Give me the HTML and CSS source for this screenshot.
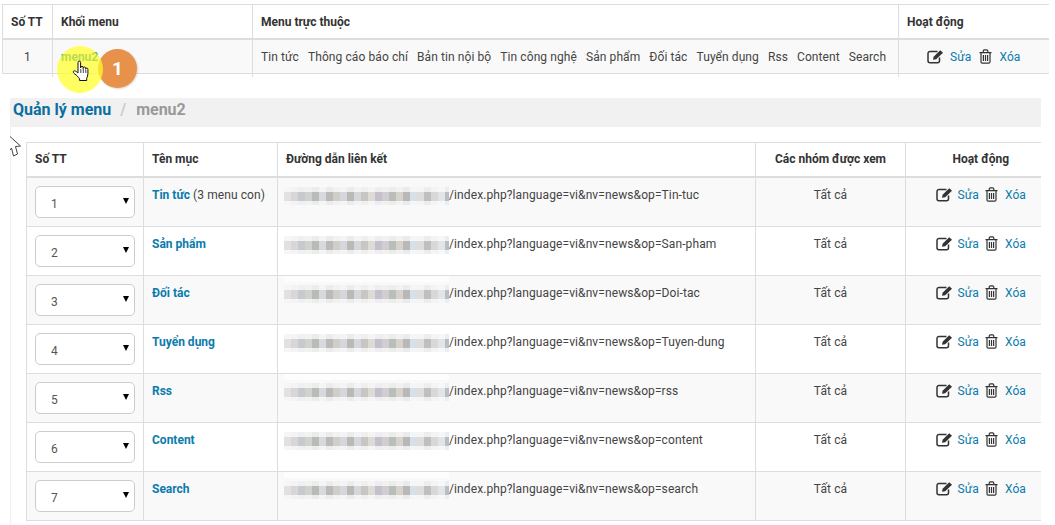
FILE: index.html
```html
<!DOCTYPE html>
<html lang="vi">
<head>
<meta charset="utf-8">
<title>Quản lý menu</title>
<link rel="stylesheet" href="styles.css">
</head>
<body>
<svg class="defs" width="0" height="0" aria-hidden="true">
  <symbol id="edit" viewBox="0 0 17 15">
    <path d="M12.500 8.500v3.200a2 2 0 0 1-2 2H3a2 2 0 0 1-2-2V4.500a2 2 0 0 1 2-2h7.500" fill="none" stroke="#333" stroke-width="1.500"/>
    <path d="M6 10.800l.6-3L13.200 1.200l2.800 2.500-6.800 6.600z" fill="#333"/>
  </symbol>
  <symbol id="trash" viewBox="0 0 13 15">
    <path d="M2 4v9a1.200 1.200 0 0 0 1.200 1.200h6.600A1.200 1.200 0 0 0 11 13V4M.5 3.600h12M4.200 3.400V2q0-1.200 1.200-1.200h2.200q1.200 0 1.200 1.200v1.400M4.400 6v6M6.500 6v6M8.600 6v6" fill="none" stroke="#333" stroke-width="1.200"/>
  </symbol>
</svg>

<table class="grid top-grid">
  <colgroup><col class="c-a"><col class="c-b"><col class="c-c"><col class="c-d"></colgroup>
  <thead>
    <tr><th>Số TT</th><th>Khối menu</th><th>Menu trực thuộc</th><th>Hoạt động</th></tr>
  </thead>
  <tbody>
    <tr class="striped">
      <td class="center">1</td>
      <td><a class="strong" href="#">menu2</a></td>
      <td class="subs"><span>Tin tức</span><span>Thông cáo báo chí</span><span>Bản tin nội bộ</span><span>Tin công nghệ</span><span>Sản phẩm</span><span>Đối tác</span><span>Tuyển dụng</span><span>Rss</span><span>Content</span><span>Search</span></td>
      <td class="center actions"><svg class="i-edit"><use href="#edit"/></svg><a href="#">Sửa</a><svg class="i-trash"><use href="#trash"/></svg><a href="#">Xóa</a></td>
    </tr>
    <tr class="tail"><td></td><td></td><td></td><td></td></tr>
  </tbody>
</table>

<section class="manage">
  <h2 class="crumb"><a href="#">Quản lý menu</a><span class="sep">/</span><span class="cur">menu2</span></h2>
  <div class="clip">
  <table class="grid main-grid">
    <colgroup><col class="m-a"><col class="m-b"><col class="m-c"><col class="m-d"><col class="m-e"></colgroup>
    <thead>
      <tr><th>Số TT</th><th>Tên mục</th><th>Đường dẫn liên kết</th><th class="center">Các nhóm được xem</th><th class="center">Hoạt động</th></tr>
    </thead>
    <tbody>
      <tr class="striped"><td><div class="sel"><select><option>1</option></select></div></td><td><a class="strong" href="#">Tin tức</a> (3 menu con)</td><td><i class="blur"></i>/index.php?language=vi&amp;nv=news&amp;op=Tin-tuc</td><td class="center">Tất cả</td><td class="center actions"><svg class="i-edit"><use href="#edit"/></svg><a href="#">Sửa</a><svg class="i-trash"><use href="#trash"/></svg><a href="#">Xóa</a></td></tr>
      <tr><td><div class="sel"><select><option>2</option></select></div></td><td><a class="strong" href="#">Sản phẩm</a></td><td><i class="blur"></i>/index.php?language=vi&amp;nv=news&amp;op=San-pham</td><td class="center">Tất cả</td><td class="center actions"><svg class="i-edit"><use href="#edit"/></svg><a href="#">Sửa</a><svg class="i-trash"><use href="#trash"/></svg><a href="#">Xóa</a></td></tr>
      <tr class="striped"><td><div class="sel"><select><option>3</option></select></div></td><td><a class="strong" href="#">Đối tác</a></td><td><i class="blur"></i>/index.php?language=vi&amp;nv=news&amp;op=Doi-tac</td><td class="center">Tất cả</td><td class="center actions"><svg class="i-edit"><use href="#edit"/></svg><a href="#">Sửa</a><svg class="i-trash"><use href="#trash"/></svg><a href="#">Xóa</a></td></tr>
      <tr><td><div class="sel"><select><option>4</option></select></div></td><td><a class="strong" href="#">Tuyển dụng</a></td><td><i class="blur"></i>/index.php?language=vi&amp;nv=news&amp;op=Tuyen-dung</td><td class="center">Tất cả</td><td class="center actions"><svg class="i-edit"><use href="#edit"/></svg><a href="#">Sửa</a><svg class="i-trash"><use href="#trash"/></svg><a href="#">Xóa</a></td></tr>
      <tr class="striped"><td><div class="sel"><select><option>5</option></select></div></td><td><a class="strong" href="#">Rss</a></td><td><i class="blur"></i>/index.php?language=vi&amp;nv=news&amp;op=rss</td><td class="center">Tất cả</td><td class="center actions"><svg class="i-edit"><use href="#edit"/></svg><a href="#">Sửa</a><svg class="i-trash"><use href="#trash"/></svg><a href="#">Xóa</a></td></tr>
      <tr><td><div class="sel"><select><option>6</option></select></div></td><td><a class="strong" href="#">Content</a></td><td><i class="blur"></i>/index.php?language=vi&amp;nv=news&amp;op=content</td><td class="center">Tất cả</td><td class="center actions"><svg class="i-edit"><use href="#edit"/></svg><a href="#">Sửa</a><svg class="i-trash"><use href="#trash"/></svg><a href="#">Xóa</a></td></tr>
      <tr class="striped"><td><div class="sel"><select><option>7</option></select></div></td><td><a class="strong" href="#">Search</a></td><td><i class="blur"></i>/index.php?language=vi&amp;nv=news&amp;op=search</td><td class="center">Tất cả</td><td class="center actions"><svg class="i-edit"><use href="#edit"/></svg><a href="#">Sửa</a><svg class="i-trash"><use href="#trash"/></svg><a href="#">Xóa</a></td></tr>
    </tbody>
  </table>
  </div>
</section>

<div class="badge">1</div>
<div class="halo"></div>
<svg class="hand" viewBox="0 0 18 22" aria-hidden="true">
  <path d="M6 13V2.400a1.300 1.300 0 0 1 2.600 0V8l.1-.6a1.200 1.200 0 0 1 2.400.2v1l.1-.5a1.200 1.200 0 0 1 2.400.2v1l.1-.2a1.100 1.100 0 0 1 2.200.2v4.400c0 2-.6 3-1.200 4.600v2.200H7.600v-1.600C6 16.600 4.600 15.200 2.800 14 .8 12.600.9 10.800 2.400 10.800 3.600 10.800 5 12 6 13z" fill="#fff" stroke="#111" stroke-width="1" stroke-linejoin="round"/>
  <path d="M8.800 9v4M11.300 9v4M13.800 10v3" stroke="#111" stroke-width=".8"/>
</svg>
<svg class="arrow" viewBox="0 0 12 22" aria-hidden="true">
  <path d="M0 .5L10.500 10l-5 .5 2 7.500-4 2-2-8L0 14" fill="#fff" stroke="#444" stroke-width="1"/>
</svg>
</body>
</html>
```

FILE: styles.css
```css
html, body { margin: 0; padding: 0; background: #fff; overflow: hidden; }
body { position: relative; width: 1055px; height: 525px; padding-top: 4px; box-sizing: border-box; font: 12px/17px Roboto, "Liberation Sans", sans-serif; color: #444; }
.defs { position: absolute; }
a { color: #0b7bad; text-decoration: none; }

.grid { border-collapse: collapse; table-layout: fixed; }
.grid th, .grid td { border: 1px solid #ddd; }
.grid tr > :last-child { border-right: 0; }
.grid th { font-weight: 700; color: #333; text-align: left; padding: 2px 8px 0; height: 34px; border-bottom: 2px solid #ddd; box-sizing: border-box; }
.grid td { padding: 2px 8px 0; letter-spacing: .1px; }
.grid .center { text-align: center; }
.striped td { background: #f9f9f9; }
.strong { font-weight: 700; letter-spacing: 0; }

.top-grid { width: 1046px; margin-left: 2px; }
.c-a { width: 50px; } .c-b { width: 200px; } .c-c { width: 646px; } .c-d { width: 150px; }
.top-grid tbody tr:first-child td { height: 31px; }
.top-grid .tail td { height: 3px; padding: 0; border-bottom: 0; background: #fff; }
.top-grid .tail td:first-child { border-left: 0; }
.grid .subs { letter-spacing: .09px; }
.subs span { margin-right: 9px; }
.subs span:last-child { margin-right: 0; }

.manage { margin: 21px 0 0 10px; width: 1030px; border-left: 1px solid #f1f1f1; height: 428px; }
.crumb { margin: 0 0 0 -1px; height: 29px; background: #f1f1f1; padding-left: 3px; font-size: 16px; line-height: 24px; font-weight: 700; }
.crumb a { color: #0b6f9f; }
.sep { color: #ccc; margin: 0 10px 0 9px; }
.cur { color: #999; }

.clip { overflow: hidden; margin: 15px 0 0 15px; }
.main-grid { width: 1029px; }
.m-a { width: 117px; } .m-b { width: 134px; } .m-c { width: 478px; } .m-d { width: 150px; } .m-e { width: 150px; }
.main-grid th { height: 35px; padding-top: 1px; }
.main-grid td { height: 49px; box-sizing: border-box; vertical-align: top; padding-top: 9px; }
.main-grid td:first-child { padding-top: 8px; }
.main-grid .i-edit { margin-right: 5px; }
.main-grid .i-trash { margin: 0 7px 0 6px; }

.sel { position: relative; width: 100px; height: 32px; }
.sel select { width: 100%; height: 32px; appearance: none; -webkit-appearance: none; background: #fff; border: 1px solid #ccc; border-radius: 5px; padding: 4px 0 0 15px; font: 12px Roboto, "Liberation Sans", sans-serif; color: #555; }
.sel::after { content: ""; position: absolute; right: 6px; top: 12px; border-style: solid; border-color: #000 transparent transparent; border-width: 6px 3px 0; }

.blur { position: relative; display: inline-block; width: 165px; height: 18px; margin: -3px 0 -3px -2px; vertical-align: -3px;
  background:
    linear-gradient(180deg, rgba(255,255,255,.72) 0 5px, transparent 5px 14px, rgba(255,255,255,.72) 14px),
    linear-gradient(90deg, #e4e0e2 0 7px, #d8d6d6 7px 14px, #c6cacc 14px 21px, #cfd2ce 21px 28px, #b9bbb8 28px 35px, #d6dadc 35px 42px, #bdb9b9 42px 49px, #cfcfc8 49px 56px, #d9d5dc 56px 63px, #b8bab6 63px 70px, #d4d8da 70px 77px, #c8c6c0 77px 84px, #dedad6 84px 91px, #c4c0cc 91px 98px, #d0ced2 98px 105px, #bbbdb9 105px 112px, #d6d2cc 112px 119px, #b9b7b7 119px 126px, #d6e0e6 126px 133px, #e0dcdc 133px 140px, #bfbfc2 140px 147px, #d8d8d8 147px 154px, #e2e4e8 154px 161px, #b9bec2 161px); }
.main-grid tbody tr + tr .blur::before { content: ""; position: absolute; left: 0; right: 0; top: -9px; height: 6px; background: rgba(255,255,255,.7); }

.actions { white-space: nowrap; }
.actions a { color: #0b7bad; }
.i-edit { width: 17px; height: 15px; vertical-align: -3px; margin-right: 6px; }
.i-trash { width: 13px; height: 15px; vertical-align: -3px; margin: 0 7px 0 8px; }

.halo { position: absolute; left: 57px; top: 46px; width: 46px; height: 47px; border-radius: 50%; background: rgba(255, 255, 40, .72); }
.badge { position: absolute; left: 98px; top: 49px; width: 39px; height: 39px; border-radius: 50%; background: #e8914a; color: #fff; font-size: 19px; font-weight: 700; line-height: 39px; text-align: center; box-shadow: 1px 1px 2px rgba(0,0,0,.15); }
.hand { position: absolute; left: 72px; top: 60px; width: 18px; height: 22px; }
.arrow { position: absolute; left: 10px; top: 136px; width: 12px; height: 22px; }
```
